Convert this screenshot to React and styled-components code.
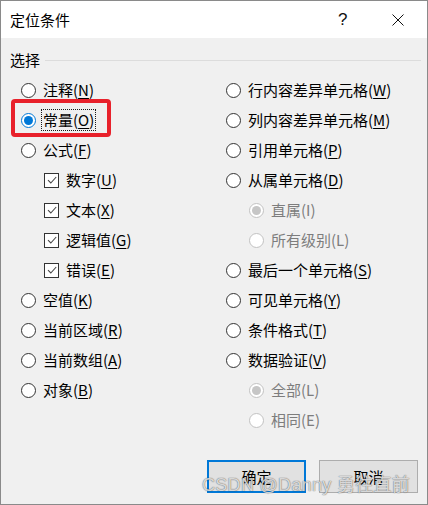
import styled, { createGlobalStyle } from "styled-components";

const GlobalStyle = createGlobalStyle`
  html, body {
    margin: 0;
    padding: 0;
    background: #ffffff;
  }
  * {
    box-sizing: border-box;
  }
`;

const FONT = `"Noto Sans CJK SC", "Noto Sans", sans-serif`;

const Window = styled.div`
  position: relative;
  width: 428px;
  height: 505px;
  display: flex;
  flex-direction: column;
  border: 1px solid #8a8a8a;
  font-family: ${FONT};
  font-size: 15px;
  color: #000;
  overflow: hidden;
`;

const TitleBar = styled.div`
  height: 37px;
  flex: none;
  display: flex;
  align-items: center;
  padding-left: 9px;
  background: #ffffff;
`;

const Title = styled.div`
  flex: 1;
  line-height: 20px;
`;

const HelpGlyph = styled.span`
  width: 10px;
  margin-right: 44px;
  font-family: "Liberation Sans", sans-serif;
  font-size: 17px;
  line-height: 20px;
  color: #111;
`;

const CloseGlyph = styled.svg`
  width: 12px;
  height: 12px;
  margin-right: 23px;
`;

const Body = styled.div`
  flex: 1;
  display: flex;
  flex-direction: column;
  background: #f0f0f0;
`;

const GroupHeader = styled.div`
  margin-top: 12px;
  height: 20px;
  display: flex;
  align-items: center;
  padding-left: 9px;
  line-height: 20px;
`;

const GroupLine = styled.div`
  flex: 1;
  height: 1px;
  margin: 0 6px 0 5px;
  background: #dcdcdc;
`;

const Options = styled.div`
  margin-top: 5px;
  padding-left: 20px;
  display: grid;
  grid-template-columns: 205px 1fr;
`;

const Column = styled.div`
  display: flex;
  flex-direction: column;
`;

const Row = styled.div`
  position: relative;
  height: 30px;
  display: flex;
  align-items: center;
  gap: 6px;
  padding-left: ${(p) => (p.$indent ? 23 : 0)}px;
  color: ${(p) => (p.$disabled ? "#7d7d7d" : "#000")};
  line-height: 20px;
  white-space: nowrap;
`;

const Label = styled.span`
  padding: 0 1px;
  margin-left: -1px;
  border: 1px dotted ${(p) => (p.$focused ? "#1a1a1a" : "transparent")};
  u {
    text-underline-offset: 2px;
  }
`;

const RadioCircle = styled.span`
  position: relative;
  flex: none;
  width: 15px;
  height: 15px;
  border-radius: 50%;
  background: #fff;
  border: 1px solid
    ${(p) => (p.$disabled ? "#c2c2c2" : p.$checked ? "#0078d7" : "#333")};

  &::after {
    content: "";
    display: ${(p) => (p.$checked ? "block" : "none")};
    position: absolute;
    left: 2px;
    top: 2px;
    width: 9px;
    height: 9px;
    border-radius: 50%;
    background: ${(p) => (p.$disabled ? "#c6c6c6" : "#0078d7")};
  }
`;

const CheckBox = styled.span`
  flex: none;
  width: 15px;
  height: 15px;
  display: flex;
  align-items: center;
  justify-content: center;
  border: 1px solid #333;
  background: #fff;
`;

const Highlight = styled.div`
  position: absolute;
  left: -10px;
  top: -6px;
  width: 100px;
  height: 38px;
  border: 4px solid #e8212b;
  border-radius: 4px;
  pointer-events: none;
`;

const Footer = styled.div`
  margin-top: auto;
  display: flex;
  justify-content: flex-end;
  gap: 13px;
  padding: 0 9px 11px 0;
`;

const Button = styled.button`
  width: 99px;
  height: 33px;
  font-family: ${FONT};
  font-size: 15px;
  color: #000;
  background: #e1e1e1;
  border: ${(p) => (p.$primary ? "2px solid #0078d7" : "1px solid #adadad")};
  padding: 0;
`;

const Watermark = styled.div`
  position: absolute;
  left: 201px;
  top: 473px;
  font-family: "Liberation Sans", "Noto Sans CJK SC", sans-serif;
  font-size: 18px;
  letter-spacing: 0.3px;
  line-height: 22px;
  color: rgba(255, 255, 255, 0.75);
  text-shadow: 0 0 1px rgba(60, 60, 60, 0.7), 0 0 1px rgba(60, 60, 60, 0.5);
  white-space: nowrap;
  pointer-events: none;
`;

function Radio({ label, hotkey, checked, disabled, indent, focused, highlight }) {
  return (
    <Row $indent={indent} $disabled={disabled}>
      <RadioCircle $checked={checked} $disabled={disabled} />
      <Label $focused={focused}>
        {label}(
        {disabled ? hotkey : <u>{hotkey}</u>})
      </Label>
      {highlight && <Highlight />}
    </Row>
  );
}

function Check({ label, hotkey }) {
  return (
    <Row $indent>
      <CheckBox>
        <svg width="12" height="12" viewBox="0 0 12 12">
          <path d="M2 6.2 L4.8 9 L10.2 3" fill="none" stroke="#444" strokeWidth="1.1" />
        </svg>
      </CheckBox>
      <Label>
        {label}(<u>{hotkey}</u>)
      </Label>
    </Row>
  );
}

export default function App() {
  return (
    <>
      <GlobalStyle />
      <Window>
        <TitleBar>
          <Title>定位条件</Title>
          <HelpGlyph>?</HelpGlyph>
          <CloseGlyph viewBox="0 0 12 12">
            <path d="M0.5 0.5 L11.5 11.5 M11.5 0.5 L0.5 11.5" stroke="#111" strokeWidth="1" />
          </CloseGlyph>
        </TitleBar>
        <Body>
          <GroupHeader>
            选择
            <GroupLine />
          </GroupHeader>
          <Options>
            <Column>
              <Radio label="注释" hotkey="N" />
              <Radio label="常量" hotkey="O" checked focused highlight />
              <Radio label="公式" hotkey="F" />
              <Check label="数字" hotkey="U" />
              <Check label="文本" hotkey="X" />
              <Check label="逻辑值" hotkey="G" />
              <Check label="错误" hotkey="E" />
              <Radio label="空值" hotkey="K" />
              <Radio label="当前区域" hotkey="R" />
              <Radio label="当前数组" hotkey="A" />
              <Radio label="对象" hotkey="B" />
            </Column>
            <Column>
              <Radio label="行内容差异单元格" hotkey="W" />
              <Radio label="列内容差异单元格" hotkey="M" />
              <Radio label="引用单元格" hotkey="P" />
              <Radio label="从属单元格" hotkey="D" />
              <Radio label="直属" hotkey="I" indent disabled checked />
              <Radio label="所有级别" hotkey="L" indent disabled />
              <Radio label="最后一个单元格" hotkey="S" />
              <Radio label="可见单元格" hotkey="Y" />
              <Radio label="条件格式" hotkey="T" />
              <Radio label="数据验证" hotkey="V" />
              <Radio label="全部" hotkey="L" indent disabled checked />
              <Radio label="相同" hotkey="E" indent disabled />
            </Column>
          </Options>
          <Footer>
            <Button $primary>确定</Button>
            <Button>取消</Button>
          </Footer>
        </Body>
        <Watermark>CSDN @Danny 勇往直前</Watermark>
      </Window>
    </>
  );
}
